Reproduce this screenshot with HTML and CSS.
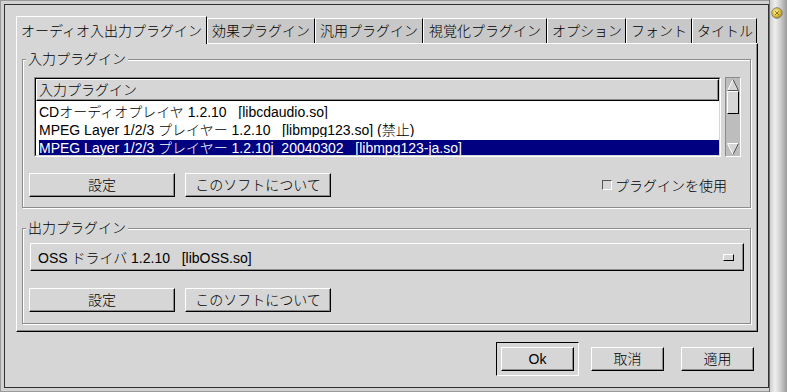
FILE: index.html
```html
<!DOCTYPE html>
<html lang="ja">

<head>
	<meta charset="UTF-8">
	<title>XMMS 設定</title>
	<link rel="stylesheet" href="styles.css">
</head>

<body>
	<div class="window">
		<div class="dialog">
			<div class="notebook">
				<div class="tabs">
					<div class="tab active">オーディオ入出力プラグイン</div>
					<div class="tab">効果プラグイン</div>
					<div class="tab">汎用プラグイン</div>
					<div class="tab tab-wide">視覚化プラグイン</div>
					<div class="tab tab-narrow">オプション</div>
					<div class="tab">フォント</div>
					<div class="tab tab-narrow">タイトル</div>
				</div>
				<div class="page">
					<fieldset class="frame">
						<legend>入力プラグイン</legend>
						<div class="list-row">
							<div class="scrolled">
								<div class="clist">
									<div class="clist-header">入力プラグイン</div>
									<div class="clist-item">CDオーディオプレイヤ 1.2.10   [libcdaudio.so]</div>
									<div class="clist-item">MPEG Layer 1/2/3 プレイヤー 1.2.10   [libmpg123.so] (禁止)</div>
									<div class="clist-item selected">MPEG Layer 1/2/3 プレイヤー 1.2.10j_20040302   [libmpg123-ja.so]</div>
								</div>
							</div>
							<div class="vscroll">
								<svg width="12" height="12" viewBox="0 0 12 12">
									<polygon points="6,0.5 11.5,11.5 0.5,11.5" fill="#d6d6d6"/>
									<line x1="0.5" y1="11.5" x2="6" y2="0.5" stroke="#fff"/>
									<line x1="6" y1="0.5" x2="11.5" y2="11.5" stroke="#555"/>
									<line x1="0.5" y1="11.5" x2="11.5" y2="11.5" stroke="#555"/>
								</svg>
								<div class="thumb"></div>
								<div class="spacer"></div>
								<svg width="12" height="12" viewBox="0 0 12 12">
									<polygon points="0.5,0.5 11.5,0.5 6,11.5" fill="#d6d6d6"/>
									<line x1="0.5" y1="0.5" x2="11.5" y2="0.5" stroke="#fff"/>
									<line x1="0.5" y1="0.5" x2="6" y2="11.5" stroke="#fff"/>
									<line x1="11.5" y1="0.5" x2="6" y2="11.5" stroke="#555"/>
								</svg>
							</div>
						</div>
						<div class="button-row">
							<button class="btn">設定</button>
							<button class="btn">このソフトについて</button>
							<label class="check"><span class="check-box"></span>プラグインを使用</label>
						</div>
					</fieldset>
					<fieldset class="frame output-frame">
						<legend>出力プラグイン</legend>
						<div class="option-menu">
							<span>OSS ドライバ 1.2.10   [libOSS.so]</span>
							<span class="indicator"></span>
						</div>
						<div class="button-row output-buttons">
							<button class="btn">設定</button>
							<button class="btn">このソフトについて</button>
						</div>
					</fieldset>
				</div>
			</div>
			<div class="actions">
				<div class="slot default"><button class="btn">Ok</button></div>
				<div class="slot"><button class="btn">取消</button></div>
				<div class="slot"><button class="btn">適用</button></div>
			</div>
		</div>
	</div>
	<div class="wm-frame">
		<svg class="close" width="12" height="12" viewBox="0 0 12 12">
			<defs>
				<radialGradient id="knob" cx="0.4" cy="0.4" r="0.6">
					<stop offset="0" stop-color="#fff6a8"/>
					<stop offset="0.6" stop-color="#e2c23a"/>
					<stop offset="1" stop-color="#a88a1c"/>
				</radialGradient>
			</defs>
			<circle cx="6" cy="6" r="5.3" fill="url(#knob)" stroke="#858585"/>
			<path d="M4 4 L8 8 M8 4 L4 8" stroke="#8a7418" stroke-width="1"/>
		</svg>
	</div>
</body>

</html>
```

FILE: styles.css
```css
* {
	box-sizing: border-box;
}

body {
	margin: 0;
	width: 787px;
	height: 392px;
	display: flex;
	overflow: hidden;
	background: #d6d6d6;
	color: #000;
	font-family: "Liberation Sans", "Noto Sans CJK JP", sans-serif;
	font-size: 14px;
	font-weight: 300;
}

.window {
	width: 769px;
	height: 392px;
	padding: 3px 0 3px 3px;
	border: 1px solid #9a9a9a;
	border-right: none;
	background: #d2d2d2;
}

.dialog {
	height: 100%;
	display: flex;
	flex-direction: column;
	padding: 11px 9px 0 11px;
	border: 1px solid #303030;
	background: #d6d6d6;
}

/* notebook */
.notebook {
	width: 742px;
}
.tabs {
	display: flex;
	align-items: flex-end;
	height: 27px;
}
.tab {
	height: 25px;
	padding: 0 4px;
	line-height: 24px;
	white-space: nowrap;
	border-top: 1px solid #fff;
	border-left: 1px solid #fff;
	border-right: 1px solid #000;
	background: #c8c8c8;
}
.tab-wide {
	padding: 0 5px;
}
.tab-narrow {
	padding: 0 3px 0 4px;
}
.tab.active {
	position: relative;
	z-index: 1;
	height: 28px;
	margin-bottom: -1px;
	padding-top: 2px;
	line-height: 25px;
	background: #d6d6d6;
}
.page {
	height: 289px;
	padding: 6px 6px 0 5px;
	border: 1px solid;
	border-color: #fff #000 #000 #fff;
	box-shadow: inset -1px -1px 0 #8c8c8c;
}

/* etched frames */
.frame {
	margin: 0;
	padding: 0;
	min-width: 0;
	border: 1px solid #8c8c8c;
	box-shadow: inset 1px 1px 0 #fff, 1px 1px 0 #fff;
}
.frame legend {
	margin-left: 3px;
	padding: 0 2px;
	line-height: 18px;
	background: #d6d6d6;
}
.output-frame {
	margin-top: 11px;
}

/* plugin list */
.list-row {
	display: flex;
	gap: 4px;
	height: 80px;
	margin: 9px 9px 0 11px;
}
.scrolled {
	flex: 1;
	border: 1px solid;
	border-color: #8c8c8c #fff #fff #8c8c8c;
}
.clist {
	height: 100%;
	overflow: hidden;
	border: 1px solid;
	border-color: #000 #d6d6d6 #d6d6d6 #000;
	background: #fff;
}
.clist-header {
	height: 22px;
	padding-left: 2px;
	line-height: 20px;
	border: 1px solid;
	border-color: #fff #000 #000 #fff;
	box-shadow: inset -1px -1px 0 #8c8c8c;
	background: #d6d6d6;
}
.clist-item {
	height: 18px;
	padding: 3px 0 0 3px;
	line-height: 16px;
	white-space: pre;
	overflow: hidden;
}
.clist-item.selected {
	background: #000080;
	background-clip: content-box;
	color: #fff;
}

.vscroll {
	width: 16px;
	display: flex;
	flex-direction: column;
	padding: 1px;
	border: 1px solid;
	border-color: #8c8c8c #fff #fff #8c8c8c;
	background: #bdbdbd;
}
.vscroll svg {
	display: block;
	flex: none;
}
.thumb {
	height: 23px;
	border: 1px solid;
	border-color: #fff #000 #000 #fff;
	background: #d6d6d6;
}
.spacer {
	flex: 1;
}

/* buttons */
.button-row {
	display: flex;
	align-items: center;
	gap: 10px;
	margin: 16px 0 10px 6px;
}
.output-buttons {
	margin: 17px 0 11px 6px;
}
.btn {
	width: 146px;
	height: 24px;
	padding: 0;
	font: inherit;
	line-height: 22px;
	color: #000;
	border: 1px solid;
	border-color: #fff #000 #000 #fff;
	box-shadow: inset -1px -1px 0 #8c8c8c;
	background: #d6d6d6;
}

.check {
	display: flex;
	align-items: center;
	gap: 3px;
	margin: 0 23px 0 auto;
}
.check-box {
	width: 10px;
	height: 10px;
	border: 1px solid;
	border-color: #555 #fff #fff #555;
	background: #d6d6d6;
}

.option-menu {
	display: flex;
	align-items: center;
	justify-content: space-between;
	height: 28px;
	margin: 6px 6px 0 7px;
	padding: 0 9px 0 7px;
	white-space: pre;
	border: 1px solid;
	border-color: #fff #000 #000 #fff;
	box-shadow: inset -1px -1px 0 #8c8c8c;
}
.indicator {
	width: 11px;
	height: 7px;
	border: 1px solid;
	border-color: #fff #000 #000 #fff;
}

.actions {
	display: flex;
	justify-content: flex-end;
	gap: 7px;
	margin-top: 10px;
}
.slot {
	width: 83px;
	height: 34px;
	padding: 5px;
}
.slot.default {
	padding: 4px;
	border: 1px solid;
	border-color: #000 #fff #fff #000;
}
.actions .btn {
	width: 73px;
}

/* window manager edge */
.wm-frame {
	width: 18px;
	height: 392px;
	padding: 7px 0 0 1px;
	border-left: 1px solid #6e6e6e;
	background: linear-gradient(to right, #cfcfcf 0, #efefef 30%, #d0d0d0 60%, #9a9a9a 100%);
}
.close {
	display: block;
}
```
